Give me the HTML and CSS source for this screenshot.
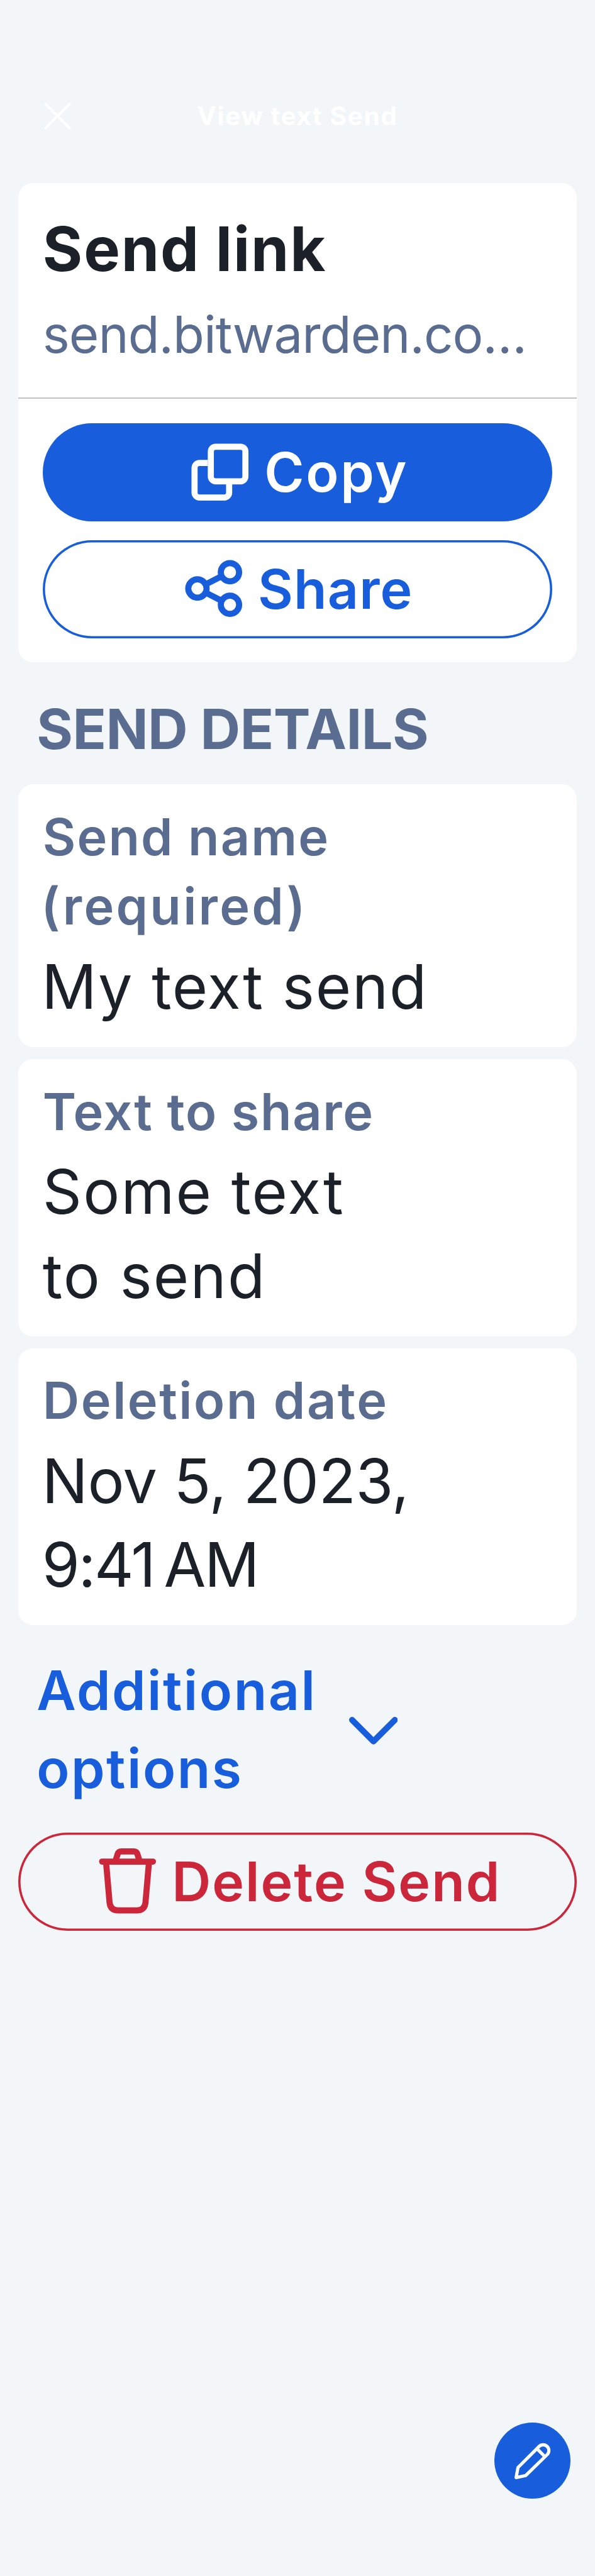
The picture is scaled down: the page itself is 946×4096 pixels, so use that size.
FILE: index.html
```html
<!DOCTYPE html>
<html lang="en">
<head>
<meta charset="utf-8">
<title>View text Send</title>
<link rel="stylesheet" href="styles.css">
</head>
<body>
<div class="screen">
  <header class="nav">
    <svg class="nav-close" viewBox="0 0 53 53" aria-label="Close"><path d="M3 3 50 50M50 3 3 50"/></svg>
    <h1 class="nav-title">View text Send</h1>
  </header>
  <main class="content">
    <section class="card link-card">
      <div class="link-info">
        <h2 class="link-title">Send link</h2>
        <div class="link-url">send.bitwarden.co…</div>
      </div>
      <div class="link-actions">
        <div class="button primary">
          <svg class="icon" viewBox="87 42 384 384"><rect x="225" y="84" width="204" height="204" rx="28"/><path d="M207 180H158a29 29 0 0 0-29 29V355a29 29 0 0 0 29 29H304a29 29 0 0 0 29-29V300"/></svg>
          <span class="copy-text">Copy</span>
        </div>
        <div class="button outline">
          <svg class="icon" viewBox="48 729 384 384"><circle cx="336" cy="825" r="54"/><circle cx="144" cy="921" r="54"/><circle cx="336" cy="1017" r="54"/><path d="M196 895 284 850M196 947 284 992"/></svg>
          <span class="share-text">Share</span>
        </div>
      </div>
    </section>
    <h2 class="section-title">SEND DETAILS</h2>
    <div class="fields">
      <section class="card field">
        <div class="label">Send name<br><span class="required">(required)</span></div>
        <div class="value name-value">My text send</div>
      </section>
      <section class="card field">
        <div class="label share-label">Text to share</div>
        <div class="value">Some text<br>to send</div>
      </section>
      <section class="card field">
        <div class="label date-label">Deletion date</div>
        <div class="value date-value">Nov 5, 2023,<br><span class="time">9:41&#8239;AM</span></div>
      </section>
    </div>
    <div class="more">
      <span class="more-text">Additional<br>options</span>
      <svg class="chevron" viewBox="0 0 96 54"><path d="M6 6 48 48 90 6"/></svg>
    </div>
    <div class="button danger">
      <svg class="icon" viewBox="18 102 384 384"><path d="M60 180H360" stroke-linecap="round"/><path d="M84 190 104 421Q109 468 155 468H265Q311 468 316 421L336 190M141 170 151 138Q156 120 174 120H246Q264 120 269 138L279 170"/></svg>
      <span class="delete-text">Delete Send</span>
    </div>
  </main>
  <div class="fab">
    <svg class="pencil" viewBox="235 240 230 230"><path d="M263 394 388 269A34 34 0 0 1 437 316L309 441 252 453ZM377 285 420 328"/></svg>
  </div>
</div>
</body>
</html>
```

FILE: styles.css
```css
* { box-sizing: border-box; }
body { margin: 0; background: #f3f6f9; }
.screen {
  position: relative;
  width: 946px;
  height: 4096px;
  font-family: Inter, "Liberation Sans", sans-serif;
  color: #1b2029;
}
h1, h2 { margin: 0; }
svg { fill: none; stroke: currentColor; flex: none; display: block; }

.nav {
  height: 291px;
  padding: 146.5px 70px 0;
  display: grid;
  grid-template-columns: 1fr auto 1fr;
  grid-template-rows: 76px;
  align-items: center;
  color: #fff;
}
.nav-close { width: 43px; height: 43px; stroke-width: 5; stroke-linecap: round; }
.nav-title { font-size: 40.7px; line-height: 76px; font-weight: 700; letter-spacing: 1.5px; }

.content { padding: 0 29px; }
.card { background: #fff; border-radius: 24px; }

.link-info { padding: 46.6px 38.8px 49.7px; border-bottom: 2px solid #c0c0c2; }
.link-title { font-size: 96.9px; line-height: 116px; font-weight: 700; letter-spacing: 1.9px; }
.link-url {
  margin-top: 28.6px;
  font-size: 81.5px;
  line-height: 100px;
  letter-spacing: -0.95px;
  color: #5a6d91;
  white-space: nowrap;
}
.link-actions { display: grid; gap: 29.2px; padding: 39.6px 38.8px 38.7px; }

.button {
  height: 156px;
  border-radius: 78px;
  display: flex;
  align-items: center;
  justify-content: center;
  gap: 19px;
  font-size: 85.9px;
  line-height: 154px;
  font-weight: 600;
  white-space: nowrap;
}
.primary { background: #175ddc; color: #fff; }
.outline { color: #175ddc; box-shadow: inset 0 0 0 3.6px #175ddc; }
.danger { color: #cb263a; box-shadow: inset 0 0 0 3.6px #cb263a; }
.icon { width: 103.5px; height: 103.5px; stroke-width: 36; margin-bottom: 2px; }
.copy-text { letter-spacing: 2.74px; margin-right: -1px; }
.share-text { letter-spacing: 1.1px; margin-right: 2px; }
.delete-text { letter-spacing: 2.04px; margin-right: -1px; }

.section-title {
  padding: 52.6px 29.2px 35px;
  font-size: 88.1px;
  line-height: 106px;
  font-weight: 700;
  letter-spacing: -0.49px;
  color: #5a6d91;
}

.fields { display: grid; gap: 19.4px; }
.field { padding: 28.6px 38.8px 29.6px; }
.label {
  font-size: 80.9px;
  line-height: 110.8px;
  font-weight: 600;
  letter-spacing: 2.1px;
  color: #5a6d91;
}
.required { letter-spacing: 3.3px; margin-left: -2.5px; }
.share-label { letter-spacing: 1.65px; }
.date-label { letter-spacing: 2.55px; }
.value {
  margin-top: 4.6px;
  font-size: 96.9px;
  line-height: 133.4px;
  letter-spacing: 2.2px;
}
.name-value { margin-left: -1.5px; letter-spacing: 1.75px; }
.date-value { margin-left: -1px; letter-spacing: -0.3px; }
.time { letter-spacing: -2.4px; }

.more {
  display: flex;
  align-items: center;
  gap: 51px;
  padding: 41.3px 29.2px 40.2px;
  color: #175ddc;
}
.more-text { font-size: 85.9px; line-height: 124.2px; font-weight: 600; letter-spacing: 2.5px; }
.chevron { width: 77.6px; height: 43.7px; stroke-width: 12; stroke-linecap: round; stroke-linejoin: round; margin-top: 4px; }

/* floating edit button, over the lower right corner */
.fab {
  position: absolute;
  right: 39px;
  bottom: 123px;
  width: 121px;
  height: 121px;
  border-radius: 50%;
  background: #175ddc;
  color: #fff;
  display: grid;
  place-items: center;
}
.pencil { width: 62px; height: 62px; stroke-width: 19; stroke-linejoin: round; }
```
